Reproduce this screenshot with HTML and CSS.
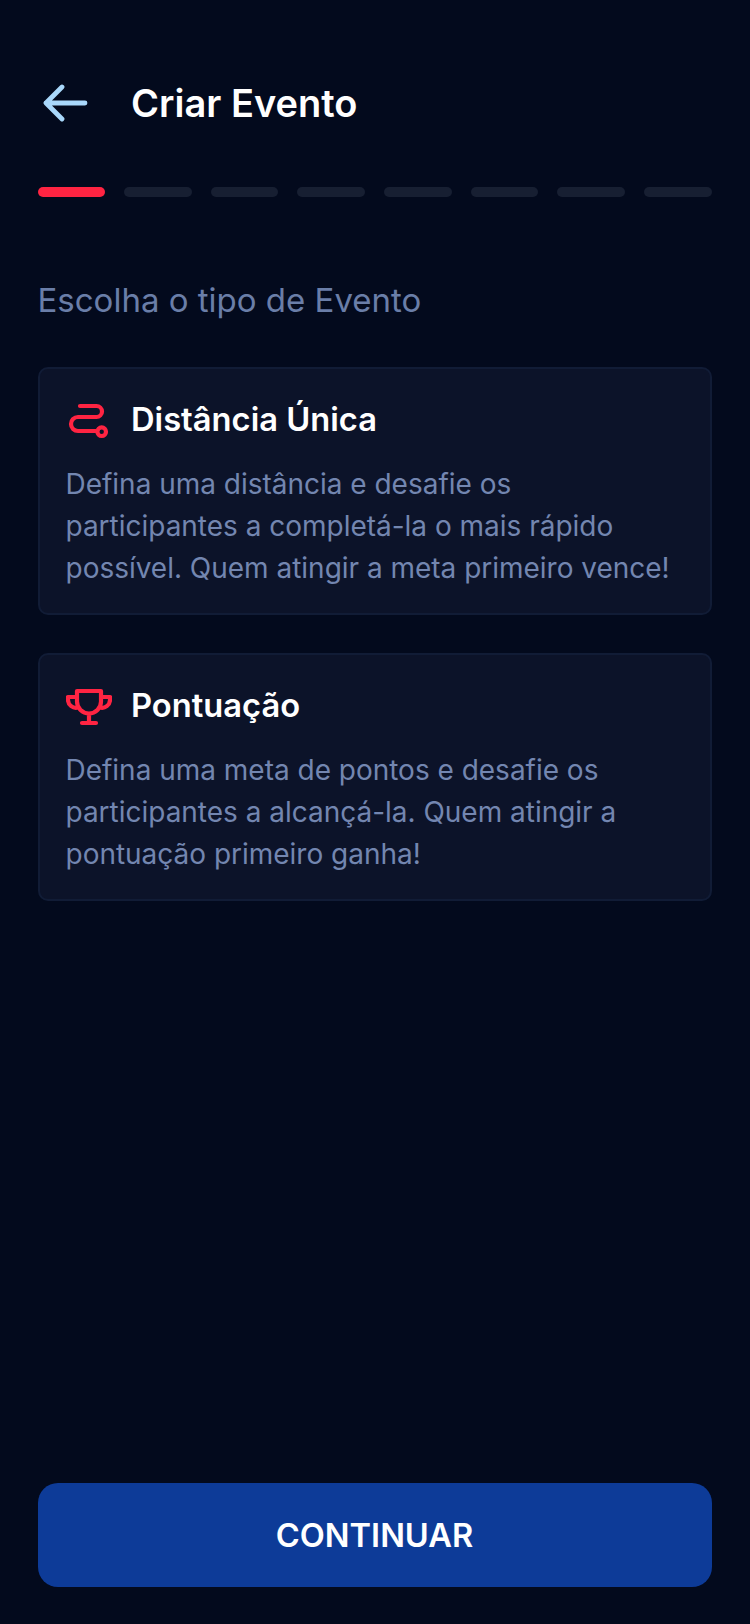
FILE: index.html
```html
<!DOCTYPE html>
<html lang="pt">
<head>
<meta charset="utf-8">
<title>Criar Evento</title>
<link rel="stylesheet" href="styles.css">
</head>
<body>
<main class="screen">
  <header class="header">
    <svg class="back" width="48" height="40" viewBox="0 0 48 40" fill="none" stroke="#a9d8fb" stroke-width="4.8" stroke-linecap="round" stroke-linejoin="round"><path d="M42 20H3M19 4L3 20l16 16"/></svg>
    <h1 class="title">Criar Evento</h1>
  </header>
  <div class="progress">
    <span class="step active"></span><span class="step"></span><span class="step"></span><span class="step"></span><span class="step"></span><span class="step"></span><span class="step"></span><span class="step"></span>
  </div>
  <p class="subtitle">Escolha o tipo de Evento</p>
  <section class="cards">
    <article class="card">
      <div class="card-head">
        <svg class="icon" width="46" height="40" viewBox="0 0 46 40" fill="none" stroke="#ff2442" stroke-width="4.2" stroke-linecap="round" stroke-linejoin="round"><path d="M14 5H30.500a5.500 5.500 0 0 1 0 11H12a7 7 0 0 0 0 14H31"/><circle cx="35.700" cy="30.700" r="4.300"/></svg>
        <h2 class="card-title">Distância Única</h2>
      </div>
      <p class="card-text">Defina uma distância e desafie os participantes a completá-la o mais rápido possível. Quem atingir a meta primeiro vence!</p>
    </article>
    <article class="card">
      <div class="card-head">
        <svg class="icon" width="46" height="40" viewBox="0 0 46 40" fill="none" stroke="#ff2442" stroke-width="4.2" stroke-linecap="round" stroke-linejoin="round"><path d="M11 4H35V14.500a12 12 0 0 1-24 0ZM23 26.500V36M16 36H30M11 10H2V13a8 8 0 0 0 10 7.500M35 10H44V13a8 8 0 0 1-10 7.500"/></svg>
        <h2 class="card-title">Pontuação</h2>
      </div>
      <p class="card-text">Defina uma meta de pontos e desafie os participantes a alcançá-la. Quem atingir a pontuação primeiro ganha!</p>
    </article>
  </section>
  <button class="cta" type="button">CONTINUAR</button>
</main>
</body>
</html>
```
FILE: styles.css
```css
* { box-sizing: border-box; }
html, body { margin: 0; padding: 0; }
body {
  width: 750px;
  height: 1624px;
  background: #030a1d;
  font-family: Inter, "Liberation Sans", sans-serif;
  overflow: hidden;
}
.screen {
  height: 1624px;
  padding: 83px 38.5px 37px 37.5px;
  display: flex;
  flex-direction: column;
}
.header {
  display: flex;
  align-items: center;
  height: 40px;
  gap: 40px;
}
.back { margin-left: 5.5px; flex: none; }
.title {
  margin: 0;
  font-size: 38px;
  font-weight: 600;
  line-height: 40px;
  color: #fff;
}
.progress {
  display: flex;
  gap: 19px;
  margin-top: 64px;
}
.step {
  flex: 1;
  height: 10px;
  border-radius: 5px;
  background: #171f32;
}
.step.active { background: #ff2442; }
.subtitle {
  margin: 80px 0 0;
  font-size: 33px;
  line-height: 46px;
  color: #6a7ea8;
}
.cards {
  display: flex;
  flex-direction: column;
  gap: 38px;
  margin-top: 44px;
}
.card {
  height: 248px;
  padding: 30px 26px 0;
  background: #0c1329;
  border: 2px solid #111c36;
  border-radius: 10px;
}
.card-head {
  display: flex;
  align-items: center;
  gap: 19.5px;
  height: 40px;
}
.icon { flex: none; margin-top: 3px; }
.card-title {
  margin: 0;
  font-size: 32.7px;
  font-weight: 600;
  line-height: 40px;
  color: #fff;
}
.card-text {
  margin: 24px 0 0;
  font-size: 28px;
  line-height: 42px;
  letter-spacing: -0.015px;
  color: #7386b0;
}
.cta {
  margin-top: auto;
  height: 104px;
  border: 0;
  border-radius: 20px;
  background: #0d3b98;
  color: #fff;
  font-family: inherit;
  font-size: 32.6px;
  font-weight: 600;
}
```
